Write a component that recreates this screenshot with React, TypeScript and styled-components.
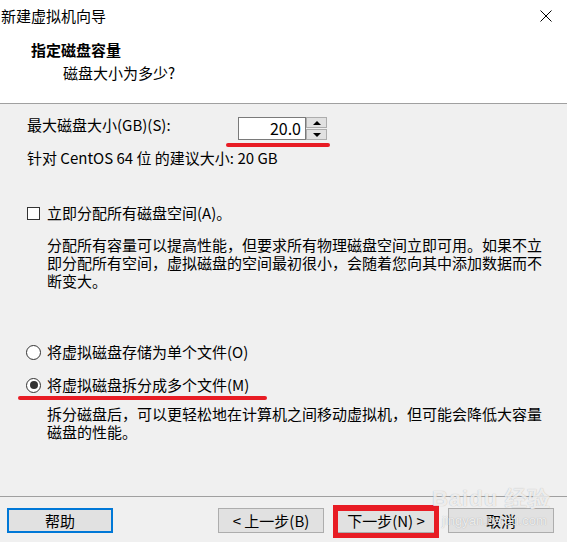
import React from 'react';
import styled, { createGlobalStyle } from 'styled-components';

const GlobalStyle = createGlobalStyle`
  html, body { margin: 0; padding: 0; background: #f0f0f0; }
  body { font-family: "Noto Sans CJK SC", "Noto Sans", sans-serif; color: #000; }
  * { box-sizing: border-box; }
`;

const RED = '#e81c24';

const Window = styled.div`
  position: relative;
  width: 567px;
  height: 542px;
  display: flex;
  flex-direction: column;
  background: #f0f0f0;
  overflow: hidden;
  font-size: 15px;
`;

const Header = styled.header`
  height: 104px;
  background: #fff;
  border-bottom: 1px solid #a0a0a0;
  display: flex;
  flex-direction: column;
`;

const TitleBar = styled.div`
  height: 31px;
  display: flex;
  align-items: center;
  justify-content: space-between;
  padding: 0 15px 0 1px;
`;

const Title = styled.span`
  line-height: 31px;
`;

const Heading = styled.div`
  margin: 9px 0 0 31px;
  font-weight: 700;
  line-height: 20px;
`;

const Subheading = styled.div`
  margin: 3px 0 0 63px;
  line-height: 20px;
`;

const Main = styled.main`
  flex: 1;
  padding: 11px 0 0 27px;
  display: flex;
  flex-direction: column;
  align-items: flex-start;
`;

const SizeRow = styled.div`
  display: grid;
  grid-template-columns: 211px auto;
  align-items: start;
`;

const Line = styled.div`
  line-height: 20px;
`;

const Spinner = styled.div`
  margin-top: 2px;
  display: flex;
  height: 23px;
`;

const SpinInput = styled.div`
  width: 68px;
  height: 23px;
  background: #fff;
  border: 1px solid #7a7a7a;
  text-align: right;
  padding-right: 4px;
  line-height: 21px;
  font-size: 16px;
`;

const SpinColumn = styled.div`
  width: 21px;
  display: flex;
  flex-direction: column;
  gap: 1px;
`;

const SpinButton = styled.div`
  flex: 1;
  background: #e1e1e1;
  border: 1px solid #adadad;
  display: flex;
  align-items: center;
  justify-content: center;
`;

const Arrow = styled.div<{ $up?: boolean }>`
  width: 0;
  height: 0;
  border-left: 4px solid transparent;
  border-right: 4px solid transparent;
  ${(p) => (p.$up ? 'border-bottom: 4px solid #000;' : 'border-top: 4px solid #000;')}
`;

const Marker = styled.div<{ $left: number; $width: number; $top: number }>`
  margin-top: ${(p) => p.$top}px;
  margin-left: ${(p) => p.$left}px;
  width: ${(p) => p.$width}px;
  height: 4px;
  border-radius: 2px;
  background: ${RED};
`;

const Hint = styled(Line)`
  margin-top: 1px;
`;

const OptionRow = styled.div<{ $top: number }>`
  margin-top: ${(p) => p.$top}px;
  display: flex;
  align-items: center;
  gap: 7px;
  line-height: 20px;
`;

const Checkbox = styled.div`
  width: 13px;
  height: 13px;
  border: 1px solid #333;
  background: #fff;
`;

const Radio = styled.div<{ $checked?: boolean }>`
  position: relative;
  width: 15px;
  height: 15px;
  margin-left: -1px;
  margin-right: -1px;
  border-radius: 50%;
  border: 1px solid #333;
  background: #fff;
  &::after {
    content: '';
    display: ${(p) => (p.$checked ? 'block' : 'none')};
    position: absolute;
    left: 2.5px;
    top: 2.5px;
    width: 8px;
    height: 8px;
    border-radius: 50%;
    background: #333;
  }
`;

const Description = styled.p<{ $top: number }>`
  margin: ${(p) => p.$top}px 0 0 20px;
  width: 500px;
  line-height: 18px;
`;

const Footer = styled.footer`
  height: 46px;
  border-top: 1px solid #a0a0a0;
  padding: 11px 13px 0 7px;
  display: flex;
  justify-content: space-between;
  align-items: flex-start;
`;

const ButtonGroup = styled.div`
  display: flex;
  gap: 9px;
`;

const Button = styled.button<{ $default?: boolean }>`
  position: relative;
  width: 106px;
  height: 25px;
  padding: 0;
  font: inherit;
  font-size: 15px;
  line-height: 21px;
  color: #000;
  background: #e1e1e1;
  border: ${(p) => (p.$default ? '2px solid #0078d7' : '1px solid #adadad')};
`;

const HighlightBox = styled.span`
  position: absolute;
  left: -1px;
  right: -1px;
  top: -4px;
  bottom: -6px;
  border: 5px solid ${RED};
  border-top-width: 6px;
  pointer-events: none;
`;

const Watermark = styled.div`
  position: absolute;
  left: 432px;
  top: 488px;
  color: rgba(255, 255, 255, 0.8);
  text-shadow: 0 0 1px rgba(0, 0, 0, 0.3);
  font-family: "Liberation Sans", sans-serif;
  pointer-events: none;
  line-height: 1;
`;

const WatermarkLogo = styled.div`
  font-size: 22px;
  font-weight: 700;
  letter-spacing: 1px;
`;

const WatermarkUrl = styled.div`
  margin-top: 4px;
  margin-left: 10px;
  font-size: 13px;
`;

function CloseIcon() {
  return (
    <svg width="12" height="12" viewBox="0 0 12 12">
      <path d="M0.5 0.5 L11.5 11.5 M11.5 0.5 L0.5 11.5" stroke="#000" strokeWidth="1" fill="none" />
    </svg>
  );
}

export default function App() {
  return (
    <>
      <GlobalStyle />
      <Window>
        <Header>
          <TitleBar>
            <Title>新建虚拟机向导</Title>
            <CloseIcon />
          </TitleBar>
          <Heading>指定磁盘容量</Heading>
          <Subheading>磁盘大小为多少?</Subheading>
        </Header>

        <Main>
          <SizeRow>
            <Line>最大磁盘大小(GB)(S):</Line>
            <Spinner>
              <SpinInput>20.0</SpinInput>
              <SpinColumn>
                <SpinButton>
                  <Arrow $up />
                </SpinButton>
                <SpinButton>
                  <Arrow />
                </SpinButton>
              </SpinColumn>
            </Spinner>
          </SizeRow>
          <Marker $top={3} $left={199} $width={104} />
          <Hint>针对 CentOS 64 位 的建议大小: 20 GB</Hint>

          <OptionRow $top={35}>
            <Checkbox />
            <span>立即分配所有磁盘空间(A)。</span>
          </OptionRow>
          <Description $top={13}>
            分配所有容量可以提高性能，但要求所有物理磁盘空间立即可用。如果不立即分配所有空间，虚拟磁盘的空间最初很小，会随着您向其中添加数据而不断变大。
          </Description>

          <OptionRow $top={52}>
            <Radio />
            <span>将虚拟磁盘存储为单个文件(O)</span>
          </OptionRow>
          <OptionRow $top={13}>
            <Radio $checked />
            <span>将虚拟磁盘拆分成多个文件(M)</span>
          </OptionRow>
          <Marker $top={1} $left={-9} $width={249} />
          <Description $top={5}>
            拆分磁盘后，可以更轻松地在计算机之间移动虚拟机，但可能会降低大容量磁盘的性能。
          </Description>
        </Main>

        <Footer>
          <Button $default>帮助</Button>
          <ButtonGroup>
            <Button>&lt; 上一步(B)</Button>
            <Button>
              下一步(N) &gt;
              <HighlightBox />
            </Button>
            <Button>取消</Button>
          </ButtonGroup>
        </Footer>

        <Watermark>
          <WatermarkLogo>Baidu 经验</WatermarkLogo>
          <WatermarkUrl>jingyan.baidu.com</WatermarkUrl>
        </Watermark>
      </Window>
    </>
  );
}
